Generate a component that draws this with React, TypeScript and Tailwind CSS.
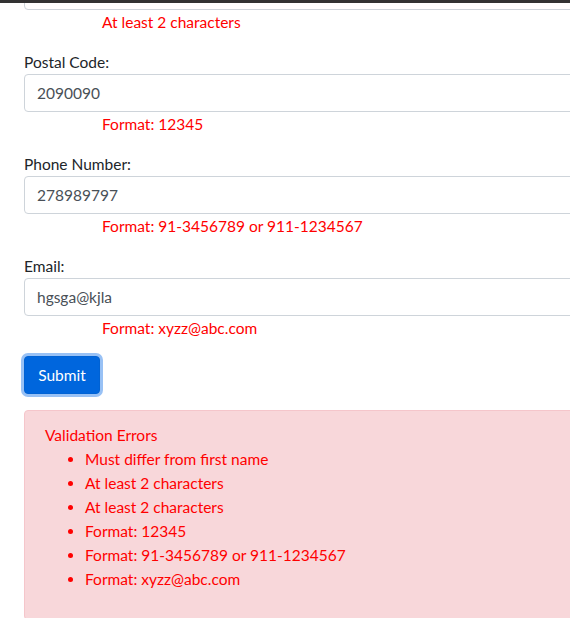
const FIELDS = [
  { label: null,            value: '',          error: 'At least 2 characters' },
  { label: 'Postal Code:',  value: '2090090',   error: 'Format: 12345' },
  { label: 'Phone Number:', value: '278989797', error: 'Format: 91-3456789 or 911-1234567' },
  { label: 'Email:',        value: 'hgsga@kjla', error: 'Format: xyzz@abc.com' },
]

const ERRORS = [
  'Must differ from first name',
  'At least 2 characters',
  'At least 2 characters',
  'Format: 12345',
  'Format: 91-3456789 or 911-1234567',
  'Format: xyzz@abc.com',
]

export default function App() {
  return (
    <div
      className="relative w-[570px] h-[618px] overflow-hidden bg-white text-[15.5px] leading-6 text-[#212529]"
      style={{ fontFamily: '"Segoe UI", Lato, "Noto Sans", sans-serif' }}
    >
      {/* browser chrome edge */}
      <div className="absolute top-0 left-0 right-0 h-[3px] bg-[#333]" />

      <form className="w-[800px] pl-6 -mt-[28px]" onSubmit={e => e.preventDefault()}>
        {FIELDS.map((f, i) => (
          <div key={i} className="mb-4">
            {f.label && <label className="block">{f.label}</label>}
            <input
              readOnly
              value={f.value}
              className="block w-full h-[38px] px-3 border border-[#ced4da] rounded-[4px] text-[#495057] bg-white outline-none"
            />
            <div className="ml-[78px] text-[#ff0000]">{f.error}</div>
          </div>
        ))}

        <button
          type="submit"
          className="h-[38px] w-[76px] rounded-[4px] bg-[#0066dd] text-white border border-[#0062d4] shadow-[0_0_0_3px_#98c1f5] mb-4"
        >
          Submit
        </button>

        <div className="border border-[#f5c6cb] bg-[#f8d7da] rounded-[4px] px-5 pt-3 pb-3 text-[#ff0000]">
          <div>Validation Errors</div>
          <ul className="list-disc pl-10 mb-4">
            {ERRORS.map((e, i) => (
              <li key={i}>{e}</li>
            ))}
          </ul>
        </div>
      </form>
    </div>
  )
}
